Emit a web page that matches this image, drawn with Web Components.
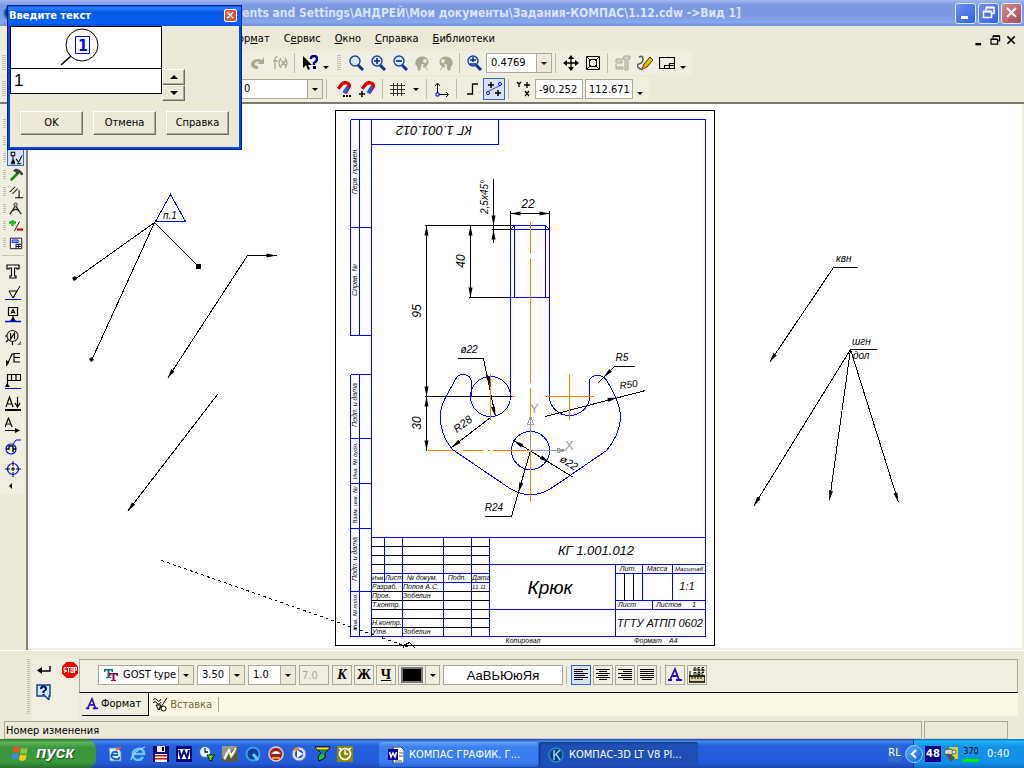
<!DOCTYPE html>
<html lang="ru">
<head>
<meta charset="utf-8">
<title>КОМПАС-3D LT</title>
<style>
html, body { margin: 0; height: 100%; }
body { background: #ece9d8; color: #000; font: 11px/14px "DejaVu Sans Condensed", "Noto Sans", sans-serif; overflow: hidden; }
</style>
</head>
<body>
<k-app></k-app>
<script>
const define = (name, css, html) => {
  const tpl = document.createElement('template');
  tpl.innerHTML = `<style>*{box-sizing:border-box}button,input,select{font:inherit;color:inherit;margin:0;border-radius:0}${css}</style>${html}`;
  customElements.define(name, class extends HTMLElement {
    constructor() {
      super();
      this.attachShadow({ mode: 'open' }).append(tpl.content.cloneNode(true));
    }
  });
};

/* ---------- icons ---------- */
const lens = (mark, x = 0) => `<path d="M9 10l5 5" stroke="#1a2f9c" stroke-width="3"/><circle cx="6" cy="6" r="5" fill="#d6effc" stroke="#1a3fa8" stroke-width="1.4"/>${mark}`;
const grayLens = `<path d="M3 15v-3l-2-2c-1-5 2-8 6-8s6 2 6 5-2 5-5 5l2-4-4 1-1 6zM9 11l4 4" fill="#aaa793" stroke="#aaa793" stroke-width="1"/><circle cx="10" cy="6" r="2" fill="#ece9d8"/>`;
const magnet = `<path d="M3 8l4-5q2-2 5-1t2 4l-4 6" fill="none" stroke="#d40000" stroke-width="3.4"/><path d="M13 6l-4 6" stroke="#1c5fe0" stroke-width="3.6"/><path d="M1 7l3 2" stroke="#fff"/>`;
const lines = w => w.map((v, i) => `<path d="M${v[0]} ${2 + i * 2}.5H${v[1]}" stroke="#000" shape-rendering="crispEdges"/>`).join('');
const ICONS = {
  redo: `<path d="M14 2v7H7l3-2q-4-1-5 1-1 3 3 3v3Q1 14 1 9q1-5 8-5l3 1z" fill="#aaa793"/>`,
  fx: `<path d="M6 2Q3 1 3 5v9M1 6h5M9 3Q5 8 9 13M13 3q4 5 0 10M9 5l5 6M14 5l-5 6" fill="none" stroke="#aaa793" stroke-width="1.3"/>`,
  whats: `<path d="M1 1v12l3-3 2 5 2-1-2-4h4z"/><path d="M9 4q0-3 3-3t3 3q0 2-3 4v2" fill="none" stroke="#000080" stroke-width="2.4"/><path d="M11 11h3v3h-3z" fill="#000080"/>`,
  zoom: lens(''),
  zoomin: lens('<path d="M3 6h6M6 3v6" stroke="#102090" stroke-width="1.6"/>'),
  zoomout: lens('<path d="M3 6h6" stroke="#102090" stroke-width="1.6"/>'),
  zoomscale: lens('<path d="M3 5h6M6 2v5M3 9h6" stroke="#102090" stroke-width="1.4"/>'),
  gl: grayLens,
  gr: `<g transform="matrix(-1 0 0 1 16 0)">${grayLens}</g>`,
  move: `<path d="M8 1v14M1 8h14" stroke="#000" stroke-width="1.3"/><path d="M8 0l3 4H5zM8 16l3-4H5zM0 8l4-3v6zM16 8l-4-3v6z"/>`,
  fit: `<path d="M1.5 1.5h13v13h-13zM4.500 4.500h7v7h-7zM2 2l4 4M14 2l-4 4M2 14l4-4M14 14l-4-4" fill="none" stroke="#000"/>`,
  caliper: `<path d="M9 1h6v3h-2v11h-3V4H8zM1 4h6v4H1zM1 12h7v2H1M1 9v5" fill="#d4d1c2" stroke="#aaa793"/>`,
  pencil: `<path d="M2 2q4-2 4 2T2 9t1 5q2 1 4-1" fill="none" stroke="#606060" stroke-width="1.6"/><path d="M5 14l2-5 6-7 3 3-6 7z" fill="#d8c800" stroke="#403000"/><path d="M5 14l2-4 2 3z" fill="#e07030"/>`,
  sheet: `<path d="M.5 2.500h15v11H.5zM5.500 13.500v-3h10M10.500 8.500v5M10 8.500h5" fill="none" stroke="#000" stroke-width="1.2"/>`,
  magdots: magnet + `<path d="M8 14h2v2H8zM11 14h2v2h-2zM14 14h2v2h-2z"/>`,
  magplus: magnet + `<path d="M3 10v6M0 13h6" stroke="#000" stroke-width="1.6"/>`,
  grid: `<path d="M0 4.500h15M0 8.500h15M0 12.500h15M3.500 2v13M7.500 2v13M11.500 2v13" stroke="#333"/>`,
  axes: `<path d="M3.500 3v10M3 13.500h11M1 5l2.500-3L6 5M12 11l2.500 2.500L12 16" fill="none" stroke="#000"/><path d="M2 12h3v3H2z" fill="#fff" stroke="#00f"/>`,
  step: `<path d="M3 13h5.500V3H14" fill="none" stroke="#000" stroke-width="1.3"/>`,
  round: `<path d="M1 11L15 4" stroke="#2050d0"/><path d="M5 1v6M2 4h6M12 9v6M9 12h6" stroke="#000" stroke-width="1.5"/><circle cx="2" cy="12" r="1.500" fill="#fff" stroke="#00f"/><circle cx="14" cy="3" r="1.500" fill="#fff" stroke="#00f"/>`,
  xy: `<path d="M1 1l2 2 2-2M3 3v3M9 10l4 5M13 10l-4 5M11 1v6M8 4h6" fill="none" stroke="#000" stroke-width="1.300"/>`,
  mark: `<path d="M2.500 1.500h4v4h-4zM4.500 6v6M2 14.500h5M8 9l3 4 4-8M9 14.500h5" fill="none" stroke="#000" stroke-width="1.200"/><path d="M4 10h2l1 4H2z"/>`,
  hammer: `<path d="M2 14l8-8" stroke="#109010" stroke-width="3"/><path d="M5 3l3-2 5 2 3 4-2 1-2-3-2 2-3-3z" fill="#444" stroke="#000" stroke-width=".6"/>`,
  par: `<path d="M1 8l6-6M4 10l6-6M11.500 6v8M7 14.500h9" stroke="#000" stroke-width="1.200"/>`,
  compass: `<path d="M7 5L1 14M8 5l6 9M3 11q5-5 9 0" fill="none" stroke="#222" stroke-width="1.500"/><circle cx="7.500" cy="3" r="2" fill="#bbb" stroke="#333"/>`,
  plusminus: `<path d="M4 1v7M0 4h8" stroke="#10c010" stroke-width="2.600"/><path d="M12 3L6 14" stroke="#000"/><path d="M9 12h7" stroke="#e00000" stroke-width="2.500"/>`,
  spec: `<path d="M1.500 2.500h13v12h-13zM8 9.500h6M8 12h6M8 9v5M11 9v5" fill="#fff" stroke="#000"/><path d="M3.500 4.500h7v3h-7z" fill="#9af" stroke="#00f"/>`,
  T: `<path d="M2 2h12v4h-2V5H9.500v8H11v2H5v-2h1.500V5H4v1H2z" fill="#fff" stroke="#000" stroke-width="1.200"/>`,
  rough: `<path d="M4 6h8l-4 7zM8 13l7-12" fill="none" stroke="#000"/><path d="M0 14.500h16" stroke="#00f"/>`,
  base: `<path d="M3.500.5h9v8h-9zM8 9v4M6 6.500l2-4 2 4M7 5.500h2" fill="none" stroke="#000" stroke-width="1.200"/><path d="M8 10l3 4H5z"/><path d="M0 14.500h16" stroke="#00f" stroke-width="1.500"/>`,
  view: `<circle cx="7.500" cy="7" r="5.500" fill="none" stroke="#222" stroke-width="1.200"/><path d="M5.500 4v6l4-6v6M0 7h2M7.500 13v3M3 11l-2 2" fill="none" stroke="#000" stroke-width="1.200"/><path d="M16 12v4h-4z" fill="#777"/>`,
  leader: `<path d="M2 14L7 3h2M9 2.500h6M9 2v9h6M9 6.500h6" fill="none" stroke="#000" stroke-width="1.200"/><path d="M1 16V9l3 2z"/>`,
  frame: `<path d="M2.500 14V1.500h13v6h-13M6.500 2v5M11 2v5" fill="none" stroke="#000" stroke-width="1.200"/><path d="M2 10l3 4H0z"/><path d="M0 15.500h16" stroke="#00f"/>`,
  Adown: `<path d="M1 12L4.500 2 8 12M2 9h5M12.500 2v9M10 8l2.500 4L15 8" fill="none" stroke="#000" stroke-width="1.200"/><path d="M0 15h16" stroke="#000" stroke-width="2"/>`,
  Aright: `<path d="M0 10L3.500 1 7 10M1 7h5M0 13.500h13" fill="none" stroke="#000" stroke-width="1.200"/><path d="M10 11l5 2.500-5 2.500z"/>`,
  detail: `<circle cx="6" cy="10" r="5" fill="none" stroke="#00f" stroke-width="1.200"/><path d="M8 5l3-4h5" fill="none" stroke="#00f"/><path d="M1 10h3V7h4v6M8 10h3" fill="none" stroke="#000" stroke-width="1.300"/>`,
  target: `<circle cx="8" cy="8" r="5.500" fill="none" stroke="#00f" stroke-width="1.200"/><path d="M8 0v16M0 8h16" stroke="#000" stroke-dasharray="5 1 4 1"/>`,
  left: `<path d="M7 4v6L4 7z" fill="#000"/>`,
  enter: `<path d="M14 4v5H4" fill="none" stroke="#000" stroke-width="1.500"/><path d="M6 5v7L1 8.500z"/>`,
  stop: `<path d="M4.500 0h7L16 4.500v7L11.500 16h-7L0 11.500v-7z" fill="#f00000"/><path d="M4.500 6Q2 5 2 7t2 1.500T2 10.500M5 5.500h3M6.500 5.500v5M9 5.500h2v5H9zM12.500 11V5.500h2v2.500h-2" fill="none" stroke="#fff" stroke-width="1.100"/>`,
  help: `<path d="M1 1h13v11h-1v4l-4-4H1z" fill="#cfe6fb" stroke="#123a8c" stroke-width="1.400"/><path d="M5 5q0-2.500 2.500-2.500T10 5q0 1-2.500 2.500v1.500" fill="none" stroke="#000080" stroke-width="2"/><path d="M6.500 10h2v1.500h-2z" fill="#000080"/>`,
  tt: `<path d="M1 2h9v3H9L8 3.500H6.500V10H8v1H3v-1h1.500V3.500H3L2 5H1z" fill="#0a7a7a"/><path d="M6 6h9v3h-1l-1-1.500h-1.500V13H13v1H8v-1h1.500V7.500H8L7 9H6z" fill="#8c0050"/>`,
  A: `<path d="M1 13h4M9 13h6M3 13L8 2l4 11M5 9h6" fill="none" stroke="#2a10b8" stroke-width="1.800"/>`,
  insert: `<path d="M1 3q2-3 4 0t4-1M1 6q2-3 4 0t4-1M4 8h5l-2.500 5zM7 13l8-12" fill="none" stroke="#000"/><circle cx="11.500" cy="11.500" r="2.500" fill="none" stroke="#000"/>`,
  al: lines([[1, 15], [1, 10], [1, 15], [1, 12], [1, 15], [1, 10]]),
  ac: lines([[1, 15], [4, 12], [1, 15], [3, 13], [1, 15], [4, 12]]),
  ar: lines([[1, 15], [6, 15], [1, 15], [4, 15], [1, 15], [6, 15]]),
  aj: lines([[1, 15], [1, 15], [1, 15], [1, 15], [1, 15], [3, 13]]),
  ruler: `<path d="M0 9h16v6H0z" fill="#d8d4a0" stroke="#000" stroke-width="1.400"/><path d="M3 9v3M6 9v3M9 9v3M12 9v3M1 4v5" stroke="#000"/><path d="M5 4V1q2-1 2 0v3M5 3h2M9 4V.5h2M9 2.500h2V4H9M13 4V.5h2M13 2.500h2V4h-2M5 8.500v-3h2v3M9 8.500v-3h2v2H9M15 5.500h-2v3h2" fill="none" stroke="#000" stroke-width=".9"/>`,
  min: `<path d="M3 11h7v3H3z"/>`,
  rest: `<path d="M5 2.500h8v6h-3M5 2v3M2.500 6.500h8v6h-8z" fill="none" stroke="currentColor" stroke-width="1.500"/><path d="M5 2.500h8M2 6.500h8" stroke="currentColor" stroke-width="2"/>`,
  close: `<path d="M3 3l9 9M12 3l-9 9" stroke="currentColor" stroke-width="2"/>`,
  flag: `<path d="M2 3q3-2 6 0L7 8Q4 6 1 8z" fill="#e8542a"/><path d="M9 3q3 2 6 0l-1 5q-3 2-6 0z" fill="#8cc63f"/><path d="M1 9q3-2 6 0l-1 5q-3-2-6 0z" fill="#3f8ce8"/><path d="M8 9q3 2 6 0l-1 5q-3 2-6 0z" fill="#f8c820"/>`,
  q1: `<path d="M2 2h9l3 4v9H3z" fill="#dff0ff" stroke="#58b"/><path d="M11 7Q7 4 5 8t3 5 4-2M5 9h6" fill="none" stroke="#1565c8" stroke-width="2"/><path d="M9 4l5-3" stroke="#e86020" stroke-width="2"/>`,
  q2: `<path d="M13 11q-2 3-5 3-4 0-5-4t2-6 6-1 3 5H4" fill="none" stroke="#68c4fa" stroke-width="2.400"/><path d="M1 14Q3 5 15 1" fill="none" stroke="#9fdcff" stroke-width="1.200"/>`,
  q3: `<path d="M0 0h16v16H0z" fill="#000070"/><path d="M4 0h8v6H4z" fill="#e8e8e8"/><path d="M9 1h2v4H9z"/><path d="M2 8h12v8H2z" fill="#fff"/><path d="M2 9h12v1.500H2zM2 12h12v1.500H2z" fill="#e00000"/>`,
  word: `<path d="M0 0h16v16H0z" fill="#000080"/><path d="M2 3h12v10H2z" fill="#fff"/><path d="M3 4l2 8 3-7 3 7 2-8" fill="none" stroke="#000080" stroke-width="2"/>`,
  wdoc: `<path d="M5 0h8l3 3v13H5z" fill="#fff" stroke="#333"/><path d="M0 2h10v11H0z" fill="#000090"/><path d="M1.500 5l1.500 5 2-4 2 4 1.500-5" fill="none" stroke="#fff" stroke-width="1.500"/><path d="M11 6h4M11 9h4M7 14h7" stroke="#555"/>`,
  q5: `<circle cx="6" cy="6" r="5.500" fill="#e8f4ff" stroke="#2c70b8"/><path d="M6 2v4h3" fill="none" stroke="#124" stroke-width="1.300"/><path d="M8 9h8l-3 3v3l-3-1v-2z" fill="#60e010" stroke="#102000"/>`,
  q6: `<path d="M0 0h16v16H0z" fill="#55574c"/><path d="M0 0h16L0 12z" fill="#96988a"/><path d="M2 13L7 4l2 6 5-8" fill="none" stroke="#fff" stroke-width="2"/><path d="M3 14l4-8 2 6 5-7" fill="none" stroke="#dd6"/>`,
  q7: `<circle cx="8" cy="8" r="6.500" fill="#173b98" stroke="#3aa4e6" stroke-width="2"/><path d="M8 8l5 6" stroke="#65c9fc" stroke-width="3"/>`,
  q8: `<circle cx="8" cy="8" r="7" fill="#a02020" stroke="#e8d0c0" stroke-width="1.500"/><path d="M3 8q5-6 10 0z" fill="#fff"/><path d="M4 11h8v2H4z" fill="#f0a020"/>`,
  q9: `<circle cx="8" cy="8" r="7" fill="#d8dce8" stroke="#6878a8"/><circle cx="8" cy="8" r="4" fill="#1858c8"/><path d="M6 4l6 4-6 4z" fill="#fff"/><path d="M2 5q2-4 6-4v3" fill="#f08030"/>`,
  q10: `<path d="M1 1h15l-5 6v5l-6 3-1-4 3-4z" fill="#18c838" stroke="#000"/><path d="M1 1h15l-2 3H3z" fill="#f0e020" stroke="#000" stroke-width=".7"/><path d="M6 5h5l-3 4z" fill="#2660dd"/>`,
  q11: `<path d="M0 0h16v16H0z" fill="#8c8800"/><circle cx="8" cy="8" r="5.500" fill="none" stroke="#fff" stroke-width="1.700"/><path d="M8 4v4h3M2 2l3 2M14 2l-3 2" fill="none" stroke="#fff" stroke-width="1.500"/>`,
  kompas: `<circle cx="8" cy="8" r="7" fill="#123c80" stroke="#1f88c8" stroke-width="1.600"/><path d="M6 3v10M6 9l6-6M8 7l4 6" fill="none" stroke="#8fd0f4" stroke-width="1.500"/>`,
  chev: `<path d="M10 4L6 8l4 4" fill="none" stroke="#fff" stroke-width="2.200"/>`,
  tray: `<path d="M6 1h9v12H6z" fill="#c8d83a"/><ellipse cx="6" cy="6" rx="5" ry="3" fill="#d8d8c8" stroke="#444"/><path d="M4 8l5 7M6 9l5 4" stroke="#555" stroke-width="3"/><circle cx="11" cy="6" r="2" fill="#eee" stroke="#666"/>`
};
customElements.define('k-icon', class extends HTMLElement {
  constructor() { super(); this.attachShadow({ mode: 'open' }); }
  connectedCallback() {
    this.shadowRoot.innerHTML = `<style>:host{display:block;flex:none;width:16px;height:16px}svg{display:block;width:100%;height:100%}</style><svg viewBox="0 0 16 16" aria-hidden="true">${ICONS[this.getAttribute('name')] || ''}</svg>`;
  }
});

/* ---------- small controls ---------- */
define('k-grip', `:host{display:block;flex:none;width:4px;align-self:stretch;margin:4px 0;background:repeating-linear-gradient(#c1beae 0 1px,transparent 1px 2px)}`, '');
define('k-sep', `:host{display:block;flex:none;width:8px;align-self:stretch;padding:2px 3px}i{display:block;width:1px;height:100%;background:#bfbcab}`, '<i></i>');
define('k-drop', `:host{display:flex;flex:none;width:10px;justify-content:center;align-self:stretch;align-items:flex-end;padding-bottom:6px}i{border:3px solid transparent;border-top-color:#000;border-bottom:0}`, '<i></i>');
define('k-tool', `:host{display:block;flex:none;width:22px;height:22px}button{display:flex;align-items:center;justify-content:center;width:100%;height:100%;padding:0;background:none;border:1px solid transparent}
:host([framed]) button{border-color:#aca899}:host([on]) button{background:#d9e1f2;border-color:#316ac5}
:host([small]){width:17px;height:17px}`, '<button type="button"><slot></slot></button>');
customElements.define('k-combo', class extends HTMLElement {
  constructor() { super(); this.attachShadow({ mode: 'open' }); }
  connectedCallback() {
    this.shadowRoot.innerHTML = `<style>*{box-sizing:border-box}:host{display:block;flex:none}
    .c{display:flex;align-items:center;height:20px;background:#fff;border:1px solid #aca899}
    select{flex:1;min-width:0;width:100%;height:18px;appearance:none;border:0;background:none;padding:0 0 0 4px;font:inherit;color:inherit;outline:0}
    i{flex:none;display:flex;align-items:center;justify-content:center;width:15px;height:18px;background:#ece9d8;border-left:1px solid #aca899}
    i::after{content:"";border:3px solid transparent;border-top-color:#000;border-bottom:0}</style>
    <div class="c"><slot></slot><select aria-label="${this.getAttribute('label')}"><option>${this.getAttribute('value')}</option></select><i></i></div>`;
  }
});

/* ---------- title bar ---------- */
define('k-titlebar', `
:host{display:flex;align-items:center;height:26px;padding:0 2px 0 3px;background:linear-gradient(#a0b8f0,#7b98e0 20%,#7c9ae2 60%,#86a8ee 85%,#6f8edb);color:#d8e4f8;font:bold 12px/20px "DejaVu Sans Condensed","Noto Sans",sans-serif}
.t{width:722px;flex:0 1 auto;text-align:right;white-space:nowrap;overflow:hidden}
.b{margin-left:auto;display:flex;gap:2px}
button{display:flex;align-items:center;justify-content:center;width:21px;height:21px;padding:0;border:1px solid #dfe7fb;border-radius:3px;background:linear-gradient(135deg,#6e8ff0,#2f62dc);color:#fff;fill:#fff}
button.x{background:linear-gradient(135deg,#d08a90,#a84a58)}`,
`<k-icon name="kompas"></k-icon><div class="t">Documents and Settings\\АНДРЕЙ\\Мои документы\\Задания-КОМПАС\\1.12.cdw -&gt;Вид 1]</div>
<div class="b"><button aria-label="Свернуть"><k-icon name="min"></k-icon></button><button aria-label="Восстановить"><k-icon name="rest"></k-icon></button><button class="x" aria-label="Закрыть"><k-icon name="close"></k-icon></button></div>`);

/* ---------- menu ---------- */
define('k-menubar', `
:host{display:flex;align-items:center;height:25px}
nav{display:flex;width:502px;justify-content:flex-end}
a{padding:0 7px;color:#000;text-decoration:none;white-space:nowrap}
.b{margin-left:auto;display:flex;gap:2px;padding:4px 5px 0 0}
button{border:0;background:none;padding:0;width:14px;height:14px}k-icon{width:13px;height:13px}`,
`<nav><a href="#"><u>Ф</u>ор<u>м</u>ат</a><a href="#">С<u>е</u>рвис</a><a href="#"><u>О</u>кно</a><a href="#"><u>С</u>правка</a><a href="#"><u>Б</u>иблиотеки</a></nav>
<div class="b"><button aria-label="Свернуть окно"><k-icon name="min"></k-icon></button><button aria-label="Восстановить окно"><k-icon name="rest"></k-icon></button><button aria-label="Закрыть окно"><k-icon name="close"></k-icon></button></div>`);

/* ---------- toolbars ---------- */
define('k-toolbars', `
:host{display:block;border-bottom:2px solid #7c7a6e;padding-bottom:1px}
.r{display:flex;height:24px;margin-bottom:2px}.r+.r{margin:0}
.g{display:flex;align-items:center;background:#f0eee1;padding:0 4px 0 2px}
.first{width:335px}.grow{width:649px}.push{margin-left:auto}
input{width:48px;height:20px;border:1px solid #aca899;background:#fff;padding:0 0 0 3px;margin-right:2px}
.m{width:24px}`,
`<div class="r"><div class="g first"><k-grip></k-grip><k-tool class="push"><k-icon name="redo"></k-icon></k-tool><k-tool><k-icon name="fx"></k-icon></k-tool><k-sep></k-sep><k-tool><k-icon name="whats"></k-icon></k-tool><k-drop></k-drop></div>
<div class="g"><k-grip></k-grip><k-tool style="margin-left:5px"><k-icon name="zoom"></k-icon></k-tool><k-tool><k-icon name="zoomin"></k-icon></k-tool><k-tool><k-icon name="zoomout"></k-icon></k-tool><k-tool><k-icon name="gl"></k-icon></k-tool><k-tool><k-icon name="gr"></k-icon></k-tool><k-sep></k-sep><k-tool><k-icon name="zoomscale"></k-icon></k-tool><k-combo style="width:66px" label="Масштаб" value="0.4769"></k-combo><k-sep></k-sep><k-tool><k-icon name="move"></k-icon></k-tool><k-tool><k-icon name="fit"></k-icon></k-tool><k-sep></k-sep><k-tool><k-icon name="caliper"></k-icon></k-tool><k-tool><k-icon name="pencil"></k-icon></k-tool><k-tool><k-icon name="sheet"></k-icon></k-tool><k-drop></k-drop></div></div>
<div class="r"><div class="g grow"><k-grip></k-grip><k-combo class="push" style="width:84px" label="Слой" value="0"></k-combo><k-sep></k-sep><k-tool class="m"><k-icon name="magdots"></k-icon></k-tool><k-tool class="m"><k-icon name="magplus"></k-icon></k-tool><k-sep></k-sep><k-tool><k-icon name="grid"></k-icon></k-tool><k-drop style="padding-bottom:10px;width:14px"></k-drop><k-sep></k-sep><k-tool><k-icon name="axes"></k-icon></k-tool><k-sep></k-sep><k-tool><k-icon name="step"></k-icon></k-tool><k-tool on><k-icon name="round"></k-icon></k-tool><k-sep></k-sep><k-tool><k-icon name="xy"></k-icon></k-tool><input aria-label="Координата X" value="-90.252"><input aria-label="Координата Y" value="112.671"><k-drop></k-drop></div></div>`);

/* ---------- left compact panel ---------- */
define('k-sidebar', `
.g{display:flex;flex-direction:column;background:#f0eee1;padding:11px 0 0 1px}
.s{display:flex;gap:1px;height:17px;padding-left:2px}.s k-grip{width:3px}.s k-icon{width:14px;height:14px}
hr{width:22px;margin:4px 0 4px 1px;border:0;border-top:1px solid #c5c2b2}
.big k-tool{height:22px;width:24px}.big k-tool:last-child{height:14px}`,
`<div class="g"><div class="s"><k-grip></k-grip></div><div class="s"><k-grip></k-grip></div>
${['mark', 'hammer', 'par', 'compass', 'plusminus', 'spec'].map((n, i) => `<div class="s"><k-grip></k-grip><k-tool small ${i ? '' : 'on'}><k-icon name="${n}"></k-icon></k-tool></div>`).join('')}
<hr><div class="big">${['T', 'rough', 'base', 'view', 'leader', 'frame', 'Adown', 'Aright', 'detail', 'target', 'left'].map(n => `<k-tool><k-icon name="${n}"></k-icon></k-tool>`).join('')}</div></div>`);

/* ---------- drawing ---------- */
const seg = (...a) => a.map(([x1, y1, x2, y2]) => `M${x1} ${y1}L${x2} ${y2}`).join('');
const arrow = (fx, fy, x, y, len = 10, w = 2) => {
  const d = Math.hypot(x - fx, y - fy), ux = (x - fx) / d, uy = (y - fy) / d;
  const bx = x - ux * len, by = y - uy * len;
  return `M${x} ${y}L${(bx - uy * w).toFixed(1)} ${(by + ux * w).toFixed(1)}L${(bx + uy * w).toFixed(1)} ${(by - ux * w).toFixed(1)}Z`;
};
const t = (x, y, s, size = 11, o = '') => `<text x="${x}" y="${y}" font-size="${size}" ${o}>${s}</text>`;
const mid = (x, y, s, size = 11) => t(x, y, s, size, 'text-anchor="middle"');
const rot = (x, y, s, size = 11, a = -90) => t(x, y, s, size, `text-anchor="middle" transform="rotate(${a} ${x} ${y})"`);
const blue = seg([350,119,705,119],[350,119,350,335],[359,119,359,335],[371,119,371,636],[350,227,371,227],[350,335,371,335],[705,119,705,636],
  [371,144,498,144],[498,119,498,144],[350,374,350,636],[359,374,359,636],[350,374,371,374],[350,438,371,438],[350,483,371,483],[350,528,371,528],[350,591,371,591],[350,636,705,636],
  [371,537,705,537],[384,537,384,582],[402,537,402,636],[443,537,443,636],[471,537,471,636],[489,537,489,636],[371,573,489,573],[371,582,489,582],
  [489,564,705,564],[489,609,705,609],[615,564,615,636],[615,573,705,573],[615,600,705,600],[642,564,642,600],[672,564,672,600],[652,600,652,609],
  [510,229,510,396],[549,229,549,396],[514,225,514,297],[545,225,545,297],[514,225,545,225],[510,229,549,229],[510,297,549,297],[510,229,514,225],[549,229,545,225]);
const black = seg([371,546,489,546],[371,555,489,555],[371,564,489,564],[371,591,489,591],[371,600,489,600],[371,609,489,609],[371,618,489,618],[371,627,489,627],
  [624,573,624,600],[633,573,633,600],
  [424,225,520,225],[426,225,426,450],[470,225,470,297],[468,297,511,297],[493,178,493,242],[491,229,520,229],[510,213,549,213],[510,210,510,229],[549,210,549,229],[424,396,511,396],
  [457,358,483,358],[483,358,495,416],[490,417,451,447],[634,366,614,366],[614,366,597,383],[545,416,645,390],[484,516,511,516],[511,516,530,450],[513,440,573,477],
  [154,222,74,279],[154,222,91,360],[154,222,198,266],[276,255,247,255],[247,255,167,378],[217,394,127,511],
  [857,267,833,267],[833,267,769,362],[876,349,850,349],[850,349,753,506],[850,349,829,500],[850,349,898,502]);
const heads = [[426,300,426,225],[426,300,426,396],[426,420,426,396],[426,420,426,450],[470,260,470,225],[470,260,470,297],[493,180,493,225],[493,242,493,229],[530,213,510,213],[530,213,549,213],
  [483,358,490,386],[490,396,495,416],[490,417,451,447],[614,366,603,377],[545,416,617,397],[530,450,518,492],[573,477,513,440],[513,440,549,462],
  [247,255,276,255],[247,255,167,378],[217,394,127,511],[833,267,769,362],[850,349,753,506],[850,349,829,500],[850,349,898,502]].map(a => arrow(...a)).join('');
define('k-drawing', `
svg{display:block;width:100%;height:auto}
text{font-family:"Liberation Sans",sans-serif;font-style:italic;fill:#000}
.l{fill:none;shape-rendering:crispEdges}`,
`<svg viewBox="28 104 994 544" role="img" aria-label="Чертёж: Крюк">
<g transform="translate(.5 .5)" class="l">
<path stroke="#000" d="M335 110H714V645H335Z"/>
<path stroke="#000" d="${black}"/>
<path stroke="#00f" d="${blue}"/>
<path stroke="#00f" d="M155 221H185L170 194Z"/>
<path stroke="#00f" d="M471 396V381Q470 374 462 374Q457 374 455 379L445 397Q437 412 441 427Q444 440 452 449L508 487Q518 494 530 494T552 487L606 450Q618 436 620 419Q621 405 608 383Q604 375 598 375Q589 375 589 381V396A20 19 0 0 1 549 396"/>
<circle stroke="#00f" cx="490" cy="396" r="20"/><circle stroke="#00f" cx="530" cy="450" r="19"/>
<path stroke="#ff8000" d="M530 221V253M530 257V382M530 387V501M490 373V419M511 396H514M545 396H593M569 373V419M427 450H452M454 450H456M461 450H482M487 450H489M492 450H530"/>
<path stroke="#999" d="M530 450V415L527 424H533L530 415M530 450H565L557 448V452L565 450"/>
<path stroke="#000" d="M161 560L409 647" stroke-dasharray="3 3"/>
<path stroke="#000" d="M403 648V645L409 642L415 648M400 645H416"/>
</g>
<path d="${heads}" transform="translate(.5 .5)"/>
<path d="M196 264h5v5h-5zM72 278l3-2 2 3-3 2zM89 359l3-2 2 3-3 2z"/>
<g>
${rot(434, 126, 'КГ 1.001.012', 13, 180)}${mid(596, 555, 'КГ 1.001.012', 13)}${mid(550, 594, 'Крюк', 19)}${mid(660, 627, 'ТГТУ АТПП 0602', 11)}
${mid(528, 208, '22', 12)}${rot(488, 197, '2,5x45°', 10)}${rot(465, 261, '40', 12)}${rot(421, 311, '95', 12)}${rot(421, 423, '30', 12)}
${mid(469, 353, 'ø22', 10)}${rot(465, 427, 'R28', 11, -38)}${mid(622, 361, 'R5', 10)}${rot(629, 388, 'R50', 10, -8)}${mid(494, 511, 'R24', 10)}${rot(567, 466, 'ø22', 11, 32)}
${t(163, 219, 'п.1', 10)}${t(836, 262, 'квн', 10)}${t(852, 345, 'шгн', 10)}${t(853, 359, 'дол', 10)}
${t(530, 413, 'Y', 13, 'style="fill:#999;font-style:normal"')}${t(565, 450, 'X', 13, 'style="fill:#999;font-style:normal"')}
${rot(357, 171, 'Перв. примен.', 7)}${rot(357, 280, 'Справ. №', 7)}${rot(357, 405, 'Подп. и дата', 7)}${rot(357, 461, 'Инв. № дубл.', 6)}${rot(357, 505, 'Взам. инв. №', 6)}${rot(357, 559, 'Подп. и дата', 7)}${rot(357, 612, 'Инв. № подл.', 6)}
${t(372, 580, 'Изм.', 6)}${t(385, 580, 'Лист', 7)}${mid(422, 580, '№ докум.', 7)}${mid(457, 580, 'Подп.', 7)}${t(472, 580, 'Дата', 7)}
${t(372, 589, 'Разраб.', 7)}${t(403, 589, 'Попов А.С.', 7)}${t(472, 589, '11.11.', 6)}${t(372, 598, 'Пров.', 7)}${t(403, 598, 'Зобелин', 7)}${t(372, 607, 'Т.контр.', 7)}${t(372, 625, 'Н.контр.', 7)}${t(372, 634, 'Утв.', 7)}${t(403, 634, 'Зобелин', 7)}
${mid(628, 571, 'Лит.', 7)}${mid(657, 571, 'Масса', 7)}${mid(689, 571, 'Масштаб', 6)}${mid(687, 590, '1:1', 11)}${t(618, 607, 'Лист', 7)}${t(656, 607, 'Листов', 7)}${t(692, 607, '1', 7)}
${mid(523, 643, 'Копировал', 7)}${t(634, 643, 'Формат', 7)}${t(669, 643, 'А4', 7)}
</g></svg>`);

/* ---------- property panel ---------- */
define('k-props', `
:host>k-grip,k-grip{margin:0 0 6px;width:3px}
.cmd{display:grid;grid-template-columns:26px 18px;grid-auto-rows:22px;align-content:start;align-items:center;width:47px;margin-left:2px;padding-left:4px;background:#f0eee1}
.cmd button{border:0;background:none;padding:0;width:16px;height:16px}
.main{flex:1;min-width:0;display:flex;flex-direction:column}
.fmt{display:flex;align-items:center;gap:2px;height:34px;padding:0 0 2px 18px;background:#f0eee1;border:1px solid #aca899;border-bottom:1px solid #000;white-space:nowrap}
.c1{width:96px}.c2{width:48px}.fmt k-combo{margin-right:1px}.fmt k-combo k-icon{margin-left:4px}
.num{width:30px;height:20px;border:1px solid #aca899;background:#f0eee1;color:#aca899;padding:0 2px}
.ch{width:20px;height:20px;border:1px solid #aca899;background:#f0eee1;padding:0;font:bold 14px/16px "Liberation Serif",serif}
.col{display:flex;align-items:center;width:42px;height:20px;border:1px solid #aca899;background:#f0eee1;padding:0 0 0 2px}
.col b{width:22px;height:16px;background:#000;border:2px solid #777}.col i{flex:1;margin-left:2px;height:18px;border-left:1px solid #aca899;display:flex;align-items:center;justify-content:center}
.col i::after{content:"";border:3px solid transparent;border-top-color:#000;border-bottom:0}
.smp{width:120px;height:20px;margin:0 0 0 1px;border:1px solid #aca899;background:#fff;text-align:center;font:13px/18px "Liberation Sans",sans-serif}
.fmt k-tool{width:20px;height:20px}k-sep{margin:0;width:4px;padding:6px 1px}
.tabs{display:flex;height:23px;margin-left:3px;background:#faf6e4}
.tabs button{display:flex;align-items:center;gap:2px;border:0;background:none;padding:0 4px 0 3px;color:#716b3f;font-size:11px}
.tabs .on{background:#f0eee1;border-right:1px solid #000;border-bottom:1px solid #000;color:#000;padding-right:7px}
.tabs i{width:1px;margin:4px 0 4px 2px;background:#aca899}`,
`<k-grip></k-grip><div class="cmd"><button aria-label="Создать объект"><k-icon name="enter"></k-icon></button><button aria-label="Прервать команду"><k-icon name="stop"></k-icon></button><button aria-label="Справка"><k-icon name="help"></k-icon></button></div>
<div class="main"><div class="fmt"><k-combo class="c1" label="Шрифт" value="GOST type A"><k-icon name="tt"></k-icon></k-combo><k-combo class="c2" label="Высота" value="3.50"></k-combo><k-combo class="c2" label="Сужение" value="1.0"></k-combo><input class="num" aria-label="Шаг строк" value="7.0" disabled>
<button class="ch" style="margin-left:1px"><i>К</i></button><button class="ch">Ж</button><button class="ch"><u>Ч</u></button><button class="col" aria-label="Цвет"><b></b><i></i></button><input class="smp" aria-label="Образец" value="АаВЬЮюЯя" readonly>
<k-sep></k-sep><k-tool framed on><k-icon name="al"></k-icon></k-tool><k-tool framed><k-icon name="ac"></k-icon></k-tool><k-tool framed><k-icon name="ar"></k-icon></k-tool><k-tool framed><k-icon name="aj"></k-icon></k-tool><k-sep></k-sep><k-tool framed><k-icon name="A"></k-icon></k-tool><k-tool framed><k-icon name="ruler"></k-icon></k-tool></div>
<div class="tabs"><button class="on"><k-icon name="A" style="width:14px;height:14px"></k-icon>Формат</button><button><k-icon name="insert"></k-icon>Вставка</button><i></i></div></div>`);

/* ---------- status bar ---------- */
define('k-status', `
div{border:1px solid #aca899;border-bottom-color:#c9c6b5;padding:2px 0 0 1px;white-space:nowrap}.a{flex:1}.b{width:84px}`,
`<div class="a">Номер изменения</div><div class="b"></div>`);

/* ---------- taskbar ---------- */
define('k-taskbar', `
.start{display:flex;align-items:center;gap:7px;width:96px;border:0;border-radius:0 10px 10px 0;padding:0 0 2px 11px;background:linear-gradient(#2f7a30,#5cb35c 12%,#3a943b 30%,#3b9a3c 75%,#22692a);color:#fff;font:italic bold 17px/22px "Liberation Sans",sans-serif;text-shadow:1px 1px 1px #1a4a1a}
.q{display:flex;align-items:center;gap:7px;padding-left:11px;width:283px}
.task{display:flex;align-items:center;gap:5px;width:159px;height:25px;margin:3px 1px 0 0;border:0;border-radius:3px;padding:0 0 0 9px;background:linear-gradient(#6aa0f8,#3c80f0 20%,#3a7cf0 80%,#2a62d0);color:#fff;white-space:nowrap}
.task.on{background:#1e4fb4;box-shadow:inset 1px 1px 2px #123680}
.lang{margin:7px 4px 0 auto;height:16px;width:13px;background:#3069c8;text-align:center}
.ch{align-self:center;position:relative;z-index:1;margin-right:-10px;width:18px;height:18px;border:1px solid #9cc8f8;border-radius:50%;background:linear-gradient(135deg,#5ab0f8,#1060d0);padding:0}
.tray{display:flex;align-items:center;gap:2px;width:111px;padding-left:11px;background:linear-gradient(#0c6fc8,#20b4f6 8%,#1392ea 25%,#1190ea 80%,#0c68b8);border-left:1px solid #0c3f90}
.n{width:16px;height:16px;background:#000080;text-align:center;font:bold 11px/16px "DejaVu Sans Condensed",sans-serif}
.v{width:16px;height:16px;margin-left:2px;color:#000;font-size:9px;line-height:11px;border-bottom:3px solid #00f000;text-align:center}
time{margin-left:6px}`,
`<button class="start"><k-icon name="flag" style="width:18px;height:18px"></k-icon>пуск</button>
<div class="q">${['q1', 'q2', 'q3', 'word', 'q5', 'q6', 'q7', 'q8', 'q9', 'q10', 'q11'].map(n => `<k-icon name="${n}"></k-icon>`).join('')}</div>
<button class="task"><k-icon name="wdoc"></k-icon>КОМПАС ГРАФИК. Г...</button><button class="task on"><k-icon name="kompas"></k-icon>КОМПАС-3D LT V8 Pl...</button>
<div class="lang">RL</div><button class="ch" aria-label="Показать значки"><k-icon name="chev"></k-icon></button>
<div class="tray"><div class="n">48</div><k-icon name="tray"></k-icon><div class="v">370</div><time>0:40</time></div>`);

/* ---------- dialog ---------- */
define('k-dialog', `
:host{display:block;width:235px;border:3px solid #0a48dc;border-top:0;outline:1px solid #00209c;outline-offset:-1px;background:#ece9d8}
header{display:flex;align-items:center;height:21px;margin:0 -3px;padding:0 5px 0 2px;background:linear-gradient(#0a3cc0,#2a80ff 14%,#0858e8 35%,#0662f4 85%,#0350d8);color:#fff;font-weight:bold}
header span{flex:1}
header button{display:flex;align-items:center;justify-content:center;width:13px;height:13px;padding:0;border:1px solid #fff;border-radius:2px;background:#df5632;color:#fff}
header k-icon{width:11px;height:11px}
.p{display:flex;width:152px;height:43px;border:1px solid #000;background:#fff;padding-left:48px}.p svg{width:44px;height:41px}
.e{display:flex}
.e input{width:152px;height:26px;margin-top:-1px;border:1px solid #000;background:#fff;padding:0 3px;font:17px/22px "Liberation Sans",sans-serif;outline:0}
.s{display:flex;flex-direction:column}
.s button{display:flex;align-items:center;justify-content:center;width:23px;height:16px;padding:0}
.s i{border:4px solid transparent;border-top:0;border-bottom-color:#000}.s button+button i{border-top:4px solid #000;border-bottom:0}
.s button,.f button{border:1px solid;border-color:#fff #716f64 #716f64 #fff;background:#ece9d8;box-shadow:inset -1px -1px #aca899}
.f{display:flex;justify-content:center;gap:10px;padding:10px 0 12px}
.f button{width:63px;height:24px;padding:0}`,
`<header><span>Введите текст</span><button aria-label="Закрыть"><k-icon name="close"></k-icon></button></header>
<div class="p"><svg viewBox="0 0 44 41"><circle cx="23" cy="18" r="16" fill="none" stroke="#000"/><path d="M12 29L2 38" stroke="#000" stroke-width="1.500"/><path d="M16.500 9.500h14v17h-14z" fill="none" stroke="#00f"/><text x="24" y="24" text-anchor="middle" fill="#00f" font-family="DejaVu Sans Condensed" font-weight="bold" font-size="16">1</text></svg></div>
<div class="e"><input aria-label="Текст" value="1"><div class="s"><button aria-label="Больше"><i></i></button><button aria-label="Меньше"><i></i></button></div></div>
<div class="f"><button>OK</button><button>Отмена</button><button>Справка</button></div>`);

/* ---------- application window ---------- */
define('k-app', `
:host{display:flex;flex-direction:column;min-height:100vh;position:relative}
main{flex:1;display:flex;min-height:0}
k-sidebar{display:block;flex:none;width:28px;padding-right:1px;border-right:2px solid #84827a}
k-drawing{display:block;flex:1;min-width:0;background:#fff;border-right:2px solid #f0eee1;border-bottom:2px solid #f0eee1;overflow:hidden}
k-props{display:flex;height:71px;padding:8px 6px 0 27px;border-top:1px solid #fff}
k-status{display:flex;gap:2px;height:18px;padding:0 16px 0 4px}
k-taskbar{display:flex;height:30px;background:linear-gradient(#1f4cae,#4088f0 8%,#2660dd 22%,#235ad8 80%,#1941a5);color:#fff}
k-dialog{position:absolute;left:7px;top:5px}`,
`<k-titlebar></k-titlebar><k-menubar></k-menubar><k-toolbars></k-toolbars>
<main><k-sidebar></k-sidebar><k-drawing></k-drawing></main>
<k-props></k-props><k-status></k-status><k-taskbar></k-taskbar><k-dialog></k-dialog>`);
</script>
</body>
</html>
